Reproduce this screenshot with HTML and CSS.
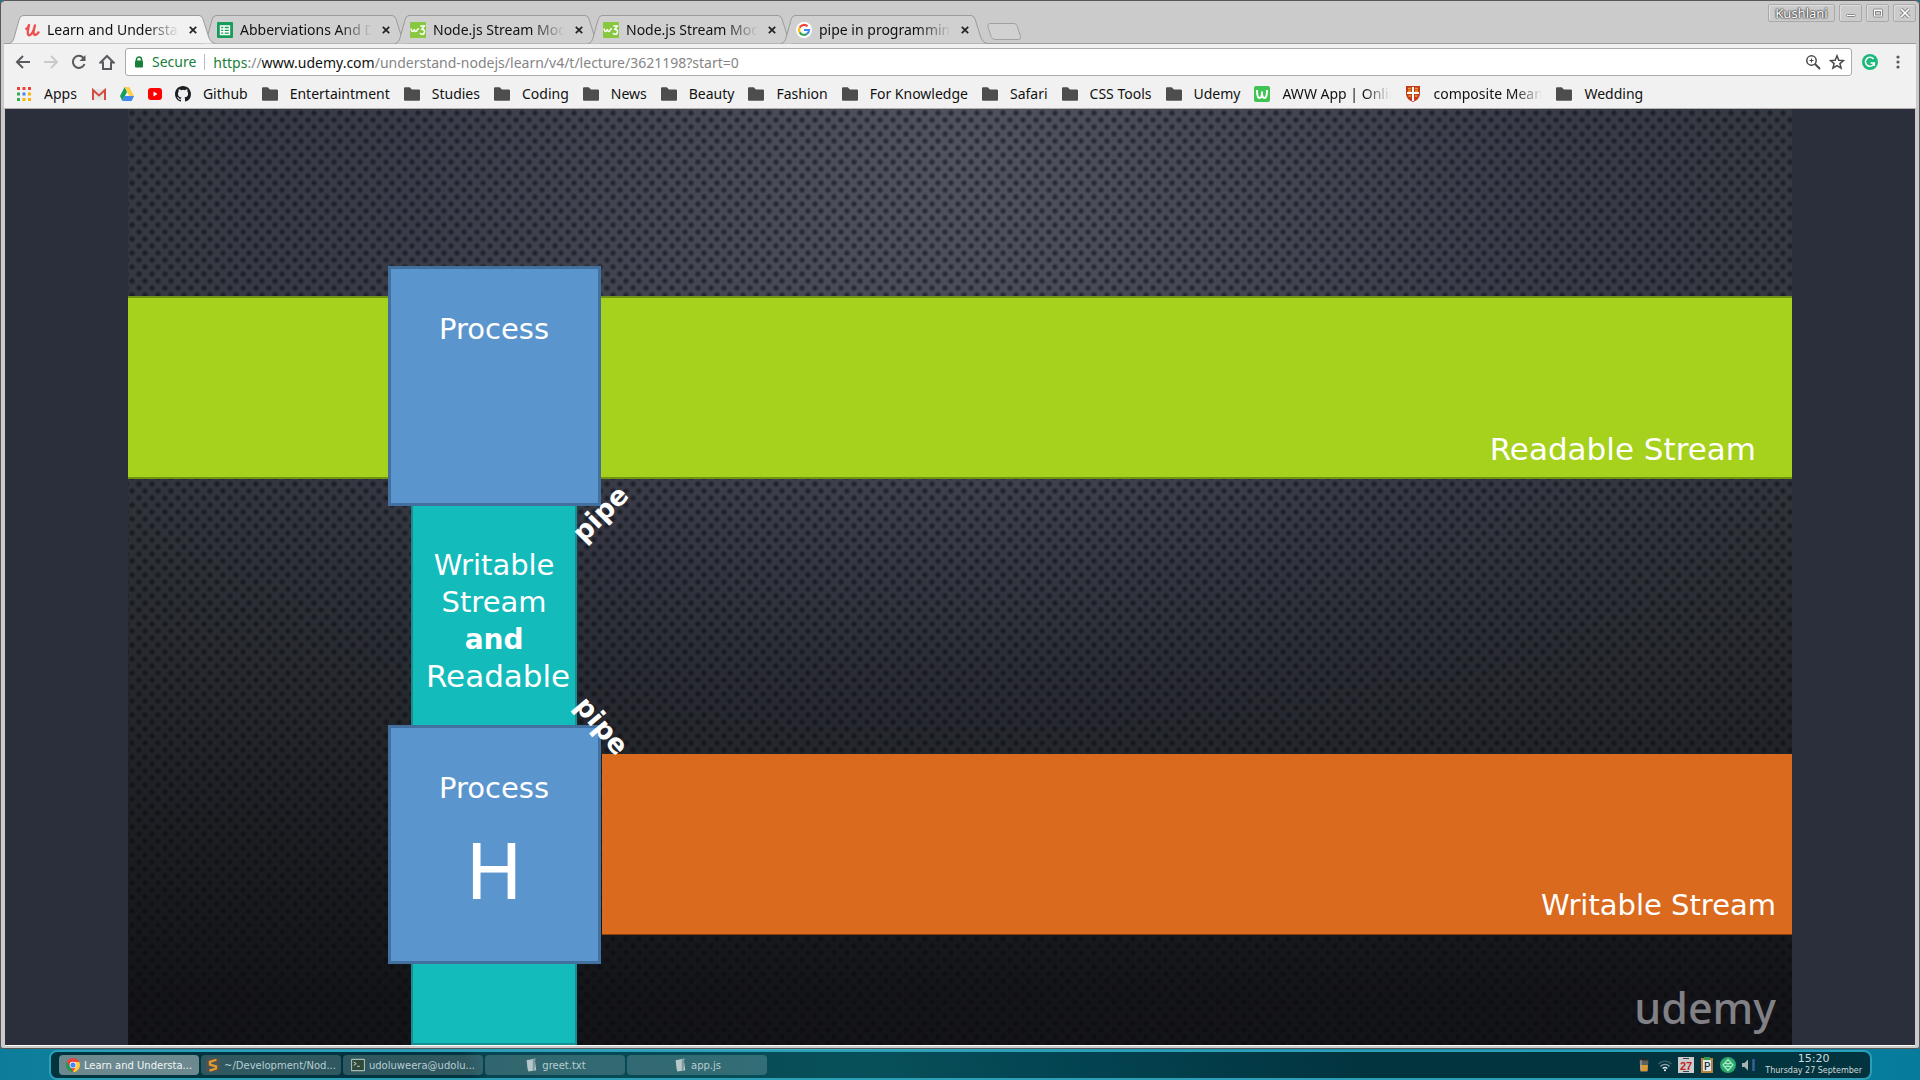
FILE: index.html
```html
<!DOCTYPE html>
<html lang="en">
<head>
<meta charset="utf-8">
<title>Learn and Understand NodeJS</title>
<link rel="stylesheet" href="styles.css">
</head>
<body>
<svg class="defs" aria-hidden="true">
  <symbol id="tab" viewBox="0 0 206 29"><path d="M0 28.500C3 28 4 26 5 23L10 5Q11 .5 14 .5H190Q193 .5 194 4L200 23Q202 28 206 28.500"/></symbol>
  <symbol id="folder" viewBox="0 0 14 12"><path d="M1 0h4l2 2h6q1 0 1 1v8q0 1-1 1H1q-1 0-1-1V1q0-1 1-1z" fill="#4d4d4d"/></symbol>
  <symbol id="close" viewBox="0 0 8 8"><path d="M.8.8 7.200 7.200M7.200.8.8 7.200" stroke="#222" stroke-width="1.700"/></symbol>
  <symbol id="w3" viewBox="0 0 16 16"><rect width="16" height="16" rx="1" fill="#8ac740"/><path d="M1 6.500q.5 3 1.700 3t1.600-2.500q.3 2.500 1.500 2.500t1.500-2q1-1 1.700-.3M10.300 4h4l-2.300 3.200q2.700.2 2.500 2.600-.4 2.700-2.700 2.400-1.300 0-1.800-1.200" fill="none" stroke="#fff" stroke-width="1.500"/></symbol>
  <symbol id="doc" viewBox="0 0 14 16"><path d="M2 2.500 12 .5l-.5 2.500L13 14 4 15.500 3 12Z" fill="#b7c8ca"/><path d="m9 2 3-1.500L11 14l-2 1z" fill="#7f989c"/></symbol>
</svg>
<main class="window">
  <header class="chrome">
    <div class="titlebar">
      <nav class="tabs">
        <a class="tab tab--active" href="#"><svg class="tab-shape"><use href="#tab"/></svg>
          <svg class="tab-icon" viewBox="0 0 16 16"><path d="M1.500 7.500C3.500 6.500 4.500 5 5 3 4.500 6 2.500 12.800 5 13.300c3 0 5-6 6-10C10 7 8.500 12.800 11 13c1.500 0 3-1.500 4-3.500" fill="none" stroke="#ec5252" stroke-width="2.300" stroke-linejoin="round"/></svg>
          <span class="tab-title">Learn and Understand</span><svg class="tab-close"><use href="#close"/></svg></a>
        <a class="tab" href="#"><svg class="tab-shape"><use href="#tab"/></svg>
          <svg class="tab-icon" viewBox="0 0 16 16"><rect width="16" height="16" rx="1" fill="#169c5b"/><path d="M3.500 4h9v8.500h-9zM3.500 7h9M3.500 9.700h9M7 4v8.500" fill="none" stroke="#fff" stroke-width="1.400"/></svg>
          <span class="tab-title">Abberviations And De</span><svg class="tab-close"><use href="#close"/></svg></a>
        <a class="tab" href="#"><svg class="tab-shape"><use href="#tab"/></svg><svg class="tab-icon"><use href="#w3"/></svg>
          <span class="tab-title">Node.js Stream Module</span><svg class="tab-close"><use href="#close"/></svg></a>
        <a class="tab" href="#"><svg class="tab-shape"><use href="#tab"/></svg><svg class="tab-icon"><use href="#w3"/></svg>
          <span class="tab-title">Node.js Stream Module</span><svg class="tab-close"><use href="#close"/></svg></a>
        <a class="tab" href="#"><svg class="tab-shape"><use href="#tab"/></svg>
          <svg class="tab-icon" viewBox="0 0 16 16"><circle cx="8" cy="8" r="8" fill="#fff"/><g fill="none" stroke-width="2.200"><path d="M11.500 4.300A5 5 0 0 0 3.700 5.600" stroke="#ea4335"/><path d="M3.700 5.600a5 5 0 0 0 0 4.800" stroke="#fbbc05"/><path d="M3.700 10.400a5 5 0 0 0 7.300 1.500" stroke="#34a853"/><path d="M8 8h5q0 2.500-2 3.900" stroke="#4285f4"/></g></svg>
          <span class="tab-title">pipe in programming</span><svg class="tab-close"><use href="#close"/></svg></a>
        <button class="new-tab" aria-label="New tab"><svg viewBox="0 0 34 17"><path d="M3 .5h24q2 0 3 2l3.500 11q.5 3-2 3H8q-3 0-4-3L.8 3Q.5.5 3 .5z" fill="#d1d1d1" stroke="#a0a0a0"/></svg></button>
      </nav>
      <div class="window-buttons">
        <button class="wm wm--user">Kushlani</button>
        <button class="wm" aria-label="Minimise"><svg viewBox="0 0 12 12"><rect x="1.500" y="7.500" width="9" height="2" rx="1" fill="#fff" stroke="#888"/></svg></button>
        <button class="wm" aria-label="Maximise"><svg viewBox="0 0 12 12"><rect x="1.500" y="2" width="9" height="8" rx="1" fill="#fff" stroke="#888"/><rect x="3.500" y="4.500" width="5" height="3.500" fill="#ccc" stroke="#888"/></svg></button>
        <button class="wm" aria-label="Close"><svg viewBox="0 0 12 12"><path d="m2 2 8 8m0-8-8 8" stroke="#888" stroke-width="3.500"/><path d="m2 2 8 8m0-8-8 8" stroke="#fff" stroke-width="1.700"/></svg></button>
      </div>
    </div>
    <div class="toolbar">
      <button class="nav" aria-label="Back"><svg viewBox="0 0 16 16"><path d="M15 8H2M8 2 2 8l6 6" class="ink"/></svg></button>
      <button class="nav nav--off" aria-label="Forward"><svg viewBox="0 0 16 16"><path d="M1 8h13M8 2l6 6-6 6" class="ink"/></svg></button>
      <button class="nav" aria-label="Reload"><svg viewBox="0 0 16 16"><path d="M13.500 10A6 6 0 1 1 12.300 3.800" class="ink"/><path d="M14.500 1v6h-6z" fill="#5a5a5e"/></svg></button>
      <button class="nav" aria-label="Home"><svg viewBox="0 0 16 16"><path d="M1.500 8.500 8 2l6.500 6.500H12V15H4V8.500z" class="ink"/></svg></button>
      <div class="omnibox">
        <svg class="lock" viewBox="0 0 10 12"><path d="M2.500 5V3.500a2.500 2.500 0 0 1 5 0V5" fill="none" stroke="#188038" stroke-width="1.500"/><rect x="1" y="4.500" width="8" height="7" rx="1" fill="#188038"/></svg>
        <span class="secure">Secure</span>
        <a class="url" href="#"><span class="green">https</span>://<span class="host">www.udemy.com</span>/understand-nodejs/learn/v4/t/lecture/3621198?start=0</a>
        <svg class="small" viewBox="0 0 16 16"><g fill="none" stroke="#4a4a4a"><circle cx="6.500" cy="6.500" r="4.700" stroke-width="1.500"/><path d="m10 10 5 5" stroke-width="2"/><path d="M4.500 6.500h4M6.500 4.500v4"/></g></svg>
        <svg class="small" viewBox="0 0 16 16"><path d="m8 1.800 1.800 4.500 4.700.3-3.600 3 1.200 4.600L8 11.600l-4.100 2.600 1.200-4.600-3.600-3 4.700-.3z" fill="none" stroke="#4a4a4a" stroke-width="1.500"/></svg>
      </div>
      <button class="nav" aria-label="Grammarly"><svg viewBox="0 0 16 16"><circle cx="8" cy="8" r="8" fill="#1cb97b"/><path d="M11.500 5A4.500 4.500 0 1 0 12.300 9H8.500M12.300 9v3" fill="none" stroke="#fff" stroke-width="1.500"/></svg></button>
      <button class="nav" aria-label="Menu"><svg viewBox="0 0 16 16"><g fill="#5a5a5e"><circle cx="8" cy="3" r="1.600"/><circle cx="8" cy="8" r="1.600"/><circle cx="8" cy="13" r="1.600"/></g></svg></button>
    </div>
    <nav class="bookmarks">
      <a href="#"><svg viewBox="0 0 14 14"><path d="M0 0h3v3H0zM5.500 0h3v3h-3zM11 0h3v3h-3z" fill="#ea4335"/><path d="M0 5.500h3v3H0z" fill="#34a853"/><path d="M5.500 5.500h3v3h-3z" fill="#4285f4"/><path d="M11 5.500h3v3h-3zM5.500 11h3v3h-3zM11 11h3v3h-3z" fill="#fbb405"/><path d="M0 11h3v3H0z" fill="#34a853"/></svg>Apps</a>
      <a href="#" aria-label="Gmail"><svg viewBox="0 0 14 14"><path d="M0 2h14v11H0z" fill="#e6e6e6"/><path d="M1 13V3l6 5.500L13 3v10" fill="none" stroke="#d54b3d" stroke-width="2"/></svg></a>
      <a href="#" aria-label="Drive"><svg viewBox="0 0 14 14"><path d="M4.700 0 0 9l2.300 5L7 5z" fill="#139f59"/><path d="M4.700 0h4.600L14 9H9.300z" fill="#ffcf48"/><path d="M4.500 9H14l-2.300 5H2.300z" fill="#4387f5"/></svg></a>
      <a href="#" aria-label="YouTube"><svg viewBox="0 0 14 14"><rect y="1" width="14" height="12" rx="3" fill="#f00"/><path d="m5.500 4.500 4 2.500-4 2.500z" fill="#fff"/></svg></a>
      <a href="#"><svg viewBox="0 0 16 16"><path fill="#1b1f23" d="M8 0C3.580 0 0 3.580 0 8c0 3.540 2.290 6.530 5.470 7.590.4.070.55-.17.55-.38 0-.19-.01-.82-.01-1.490-2.010.37-2.530-.49-2.690-.94-.09-.23-.48-.94-.82-1.130-.28-.15-.68-.52-.01-.53.63-.01 1.080.58 1.230.82.72 1.210 1.870.87 2.330.66.07-.52.28-.87.51-1.070-1.780-.2-3.640-.89-3.640-3.950 0-.87.31-1.590.82-2.150-.08-.2-.36-1.020.08-2.120 0 0 .67-.21 2.200.82a7.600 7.600 0 0 1 4 0c1.530-1.040 2.200-.82 2.200-.82.44 1.100.16 1.920.08 2.120.51.560.82 1.270.82 2.150 0 3.070-1.870 3.750-3.650 3.950.29.25.54.73.54 1.480 0 1.070-.01 1.930-.01 2.200 0 .21.15.46.55.38A8 8 0 0 0 16 8c0-4.420-3.580-8-8-8z"/></svg>Github</a>
      <a href="#"><svg><use href="#folder"/></svg>Entertaintment</a>
      <a href="#"><svg><use href="#folder"/></svg>Studies</a>
      <a href="#"><svg><use href="#folder"/></svg>Coding</a>
      <a href="#"><svg><use href="#folder"/></svg>News</a>
      <a href="#"><svg><use href="#folder"/></svg>Beauty</a>
      <a href="#"><svg><use href="#folder"/></svg>Fashion</a>
      <a href="#"><svg><use href="#folder"/></svg>For Knowledge</a>
      <a href="#"><svg><use href="#folder"/></svg>Safari</a>
      <a href="#"><svg><use href="#folder"/></svg>CSS Tools</a>
      <a href="#"><svg><use href="#folder"/></svg>Udemy</a>
      <a href="#"><svg viewBox="0 0 16 16"><rect width="16" height="16" rx="2" fill="#3fc453"/><path d="M3 4q0 8 2.500 8T8 5.500q0 6.500 2.500 6.500T13 4" fill="none" stroke="#fff" stroke-width="2"/></svg><span class="clip">AWW App | Online</span></a>
      <a href="#"><svg viewBox="0 0 16 16"><path d="M1 0h14v8q0 5-7 8-7-3-7-8z" fill="#c23a1c"/><path d="M8 1v14M2 7h12" stroke="#fff" stroke-width="2"/><path d="M3 2.500h3M10 2.500h3M3 5h3M10 5h3M3.500 10H6M10 10h2.500" stroke="#f3a030" stroke-width="1.500"/></svg><span class="clip">composite Meaning</span></a>
      <a href="#"><svg><use href="#folder"/></svg>Wedding</a>
    </nav>
  </header>
  <section class="player">
    <div class="slide">
      <div class="band band--green"><span class="big">Readable Stream</span></div>
      <div class="band band--orange"><span>Writable Stream</span></div>
      <div class="pipe-body pipe-body--upper"><span>Writable</span><span>Stream</span><b>and</b><span class="big">Readable</span></div>
      <div class="pipe-body pipe-body--lower"></div>
      <div class="process process--top">Process</div>
      <div class="process process--bottom">Process<span class="chunk">H</span></div>
      <b class="pipe-label pipe-label--up">pipe</b>
      <b class="pipe-label pipe-label--down">pipe</b>
      <div class="brand">udemy</div>
    </div>
  </section>
</main>
<footer class="panel">
  <button class="task task--active"><svg viewBox="0 0 16 16"><circle cx="8" cy="8" r="8" fill="#e8453c"/><path d="M1.100 4 5 10.500l3 5.500A8 8 0 0 1 1.100 4z" fill="#1a9d56"/><path d="M8 4.500h7.200A8 8 0 0 1 8 16l3-6z" fill="#fccd3f"/><circle cx="8" cy="8" r="3.700" fill="#fff"/><circle cx="8" cy="8" r="2.900" fill="#4285f4"/></svg>Learn and Understa...</button>
  <button class="task"><svg viewBox="0 0 16 16"><rect width="16" height="16" rx="2" fill="#4c5453"/><path d="M12 2 4.500 4.500v3l7 2v2.500L4 14.500" fill="none" stroke="#e59a2c" stroke-width="2.600"/></svg>~/Development/Nod...</button>
  <button class="task"><svg viewBox="0 0 16 16"><rect x=".5" y="1.500" width="15" height="13" rx="1" fill="#2f4a3b" stroke="#a9b8b0" stroke-width="1.500"/><path d="m3 4.500 3 2-3 2M7 9.500h3" fill="none" stroke="#dfe8df"/></svg>udoluweera@udolu...</button>
  <button class="task"><svg><use href="#doc"/></svg>greet.txt</button>
  <button class="task"><svg><use href="#doc"/></svg>app.js</button>
  <div class="tray">
    <svg viewBox="0 0 16 16"><path d="M3.500 2h9l-1 13h-7z" fill="#5b615c"/><path d="M4 8h8l-.5 6h-7z" fill="#d99a35"/><path d="M3 1.500h10v2H3z" fill="#272b2b"/><path d="M5 3v10" stroke="#aab" /></svg>
    <svg viewBox="0 0 16 16"><g fill="none" stroke-width="1.300"><path d="M1.500 7a9 9 0 0 1 13 0" stroke="#3e646c"/><path d="M3.500 9.500a6 6 0 0 1 9 0" stroke="#8ba3a8"/><path d="M5.700 11.500a3.500 3.500 0 0 1 4.600 0" stroke="#e4eaea"/></g><circle cx="8" cy="13.300" r="1" fill="#fff"/></svg>
    <svg viewBox="0 0 16 16"><path d="M0 0h16v16H0z" fill="#c9cccc"/><path d="M5 1.500h6M5 14.500h6" stroke="#444"/><text x="8" y="12.500" class="cal">27</text></svg>
    <svg viewBox="0 0 16 16"><path d="M2 1h12v15H2z" fill="#b9823c"/><path d="M4 3h8v11H4z" fill="#dce7ee"/><path d="M5 0h6v3H5z" fill="#2f9d4b"/><text x="8" y="13" class="clipboard">P</text></svg>
    <svg viewBox="0 0 16 16"><circle cx="8" cy="8" r="8" fill="#2ba86c"/><path d="m8 2.500 5 5.500-5 5.500L3 8zM4 6.500h8M4 9.500h8M6.500 8h3" fill="none" stroke="#a9ecc9" stroke-width="1.200"/></svg>
    <svg viewBox="0 0 16 16"><path d="M1 6h2.500L7 2.500v11L3.500 10H1z" fill="#a5b3b3"/><path d="M12.500 2v12" stroke="#3b5f96" stroke-width="2.500"/></svg>
  </div>
  <div class="clock"><time class="time">15:20</time><span class="date">Thursday 27 September</span></div>
</footer>
</body>
</html>
```
FILE: styles.css
```css
* { box-sizing: border-box; }
body {
  margin: 0;
  height: 100vh;
  display: flex;
  flex-direction: column;
  overflow: hidden;
  background: linear-gradient(90deg, #0b7c9a, #35b5cc 42%, #1795b4 60%, #067b9b);
  font-family: "Noto Sans", "Open Sans", sans-serif;
  font-size: 14px;
}
button { font: inherit; padding: 0; border: 0; background: none; color: inherit; }
a { color: inherit; text-decoration: none; }
svg { display: block; flex: none; }
.defs { position: absolute; width: 0; height: 0; }

.window {
  flex: 1;
  min-height: 0;
  display: flex;
  flex-direction: column;
  border: 1px solid #5a5557;
  border-radius: 4px 4px 3px 3px;
  background: #cbcbcb;
  box-shadow: inset 0 1px #908c8e;
  padding: 0 4px 2px;
}
.chrome { background: #f1f1f1; border-bottom: 1px solid #b3afae; margin: 0 -1px; }
.titlebar {
  display: flex;
  justify-content: space-between;
  align-items: flex-end;
  height: 43px;
  background: #cbcbcb;
  box-shadow: inset 0 -1px #9b9b9b;
}
.tabs { display: flex; align-items: flex-end; padding-left: 5px; }
.tab {
  position: relative;
  display: flex;
  align-items: center;
  width: 206px;
  height: 29px;
  margin-right: -13px;
  padding: 0 18px 0 15px;
}
.tab-shape { position: absolute; inset: 0; width: 206px; height: 29px; fill: #d0d0d0; stroke: #9b9b9b; }
.tab--active { z-index: 1; }
.tab--active .tab-shape { fill: #f1f1f1; }
.tab-icon { position: relative; width: 16px; height: 16px; margin-right: 7px; }
.tab-title, .clip {
  position: relative;
  overflow: hidden;
  white-space: nowrap;
  mask-image: linear-gradient(90deg, #000 75%, transparent);
}
.tab-title { width: 133px; color: #111; }
.tab-close { position: relative; width: 8px; height: 8px; margin-left: 10px; }
.new-tab { width: 34px; height: 17px; margin: 0 0 4px 13px; }
.window-buttons { display: flex; align-self: flex-start; gap: 4px; padding: 3px 0 0; }
.wm {
  display: grid;
  place-items: center;
  width: 23px;
  height: 18px;
  border: 1px solid #a9a9a9;
  border-radius: 2px;
  box-shadow: inset 1px 1px #dedede;
}
.wm svg { width: 12px; height: 12px; }
.wm--user { width: 67px; color: #fff; font-size: 13px; line-height: 16px; text-shadow: 0 0 2px #333, 0 0 2px #333, 0 0 1px #333; }

.toolbar { display: flex; align-items: center; gap: 12px; height: 36px; padding: 0 10px 0 11px; }
.nav { display: block; width: 16px; height: 16px; }
.nav svg { width: 16px; height: 16px; }
.nav--off { opacity: .25; }
.ink { fill: none; stroke: #5a5a5e; stroke-width: 2; }
.omnibox {
  flex: 1;
  display: flex;
  align-items: center;
  height: 28px;
  padding: 0 6px 0 8px;
  border: 1px solid #ababab;
  border-radius: 3px;
  background: #fff;
  margin: 0 -2px;
  gap: 8px;
}
.lock { width: 10px; height: 12px; }
.secure { color: #188038; padding-right: 8px; border-right: 1px solid #bbb; line-height: 16px; }
.url { flex: 1; color: #858585; }
.green { color: #188038; }
.host { color: #111; }
.small { width: 16px; height: 16px; }

.bookmarks { display: flex; align-items: center; gap: 12px; height: 28px; padding: 0 11px 1px 12px; white-space: nowrap; color: #111; }
.bookmarks a { display: flex; align-items: center; gap: 12px; }
.bookmarks a:nth-child(2), .bookmarks a:nth-child(n+6) { margin-left: 2px; }
.bookmarks svg { width: 16px; height: 16px; }
.bookmarks a:nth-child(-n+4) svg { height: 14px; }
.clip { width: 109px; }

.player { flex: 1; min-height: 0; display: flex; justify-content: center; overflow: hidden; background: #2a2f3b; border-bottom: 1px solid #fff; }
.slide {
  position: relative;
  flex: none;
  height: 100%;
  aspect-ratio: 16 / 9;
  overflow: hidden;
  color: #fff;
  font-family: "DejaVu Sans", sans-serif;
  font-size: 29px;
  font-weight: 400;
  line-height: 37px;
  background:
    radial-gradient(circle at 4px 4px, rgba(8, 9, 14, .55) 1px, transparent 4px) 0 0 / 13px 14px,
    radial-gradient(circle at 4px 4px, rgba(8, 9, 14, .55) 1px, transparent 4px) 7px 7px / 13px 14px,
    linear-gradient(transparent 35%, rgba(14, 14, 18, .85) 95%),
    radial-gradient(ellipse 60% 100% at 50% 5%, #51545f, #3a3d49 55%, #32363c);
}
.band {
  position: absolute;
  right: 0;
  display: flex;
  align-items: flex-end;
  justify-content: flex-end;
}
.band--green { left: 0; top: 20%; height: 19.500%; padding: 0 36px 9px 0; background: #a6d11c; border: 2px solid #6f9414; border-width: 2px 0; }
.band--orange { left: 28.500%; top: 68.900%; height: 19.400%; padding: 0 16px 10px 0; background: #da6a1e; border-bottom: 1px solid #8a4010; }
.big { font-size: 31px; }
.process {
  position: absolute;
  left: 15.600%;
  width: 12.800%;
  height: 25.600%;
  display: flex;
  flex-direction: column;
  align-items: center;
  padding-top: 42px;
  border: 3px solid #42709f;
  background: #5b95cd;
}
.process--top { top: 16.800%; }
.process--bottom { top: 65.800%; }
.chunk { font-size: 76px; line-height: 88px; margin-top: 22px; }
.pipe-body {
  position: absolute;
  left: 17%;
  width: 10%;
  display: flex;
  flex-direction: column;
  align-items: center;
  background: #13bbbb;
  border: 2px solid #178f92;
}
.pipe-body--upper { top: 42%; height: 24%; padding-top: 43px; }
.pipe-body--lower { top: 91%; bottom: 0; }
.pipe-body .big { margin-left: 8px; }
.pipe-body b { font-size: 28px; }
.pipe-label { position: absolute; font-size: 27px; }
.pipe-label--up { left: 26.400%; top: 41.200%; transform: rotate(-45deg); }
.pipe-label--down { left: 26.500%; top: 63.900%; transform: rotate(50deg); }
.brand { position: absolute; right: 16px; bottom: 7px; color: #808085; font: 500 43px/60px "Noto Sans", sans-serif; }

.panel {
  display: flex;
  align-items: center;
  gap: 2px;
  height: 30px;
  margin: 1px 48px 0 49px;
  padding: 0 8px;
  border: 2px solid #2b9fb8;
  border-radius: 8px;
  background: linear-gradient(70deg, #02343f 23%, #064550 24%, #07505a 45%, #034250 58%, #02343f 72%);
  color: #b9cdd1;
  font-family: "DejaVu Sans", sans-serif;
  font-size: 10px;
}
.task {
  display: flex;
  align-items: center;
  justify-content: center;
  gap: 4px;
  width: 140px;
  height: 20px;
  border-radius: 4px;
  background: rgba(255, 255, 255, .18);
}
.task--active { background: rgba(255, 255, 255, .42); color: #f2f5f5; }
.task svg { width: 14px; height: 14px; }
.tray { display: flex; gap: 5px; margin-left: auto; }
.tray svg { width: 16px; height: 16px; }
.cal { font: bold 11px "Liberation Sans", sans-serif; fill: #c51f1f; text-anchor: middle; }
.clipboard { font: 11px "DejaVu Sans", sans-serif; fill: #122; text-anchor: middle; }
.clock { display: flex; flex-direction: column; align-items: center; margin-left: 6px; color: #cfdadc; }
.time { font-size: 11px; line-height: 12px; }
.date { font-size: 8px; line-height: 12px; }
```
